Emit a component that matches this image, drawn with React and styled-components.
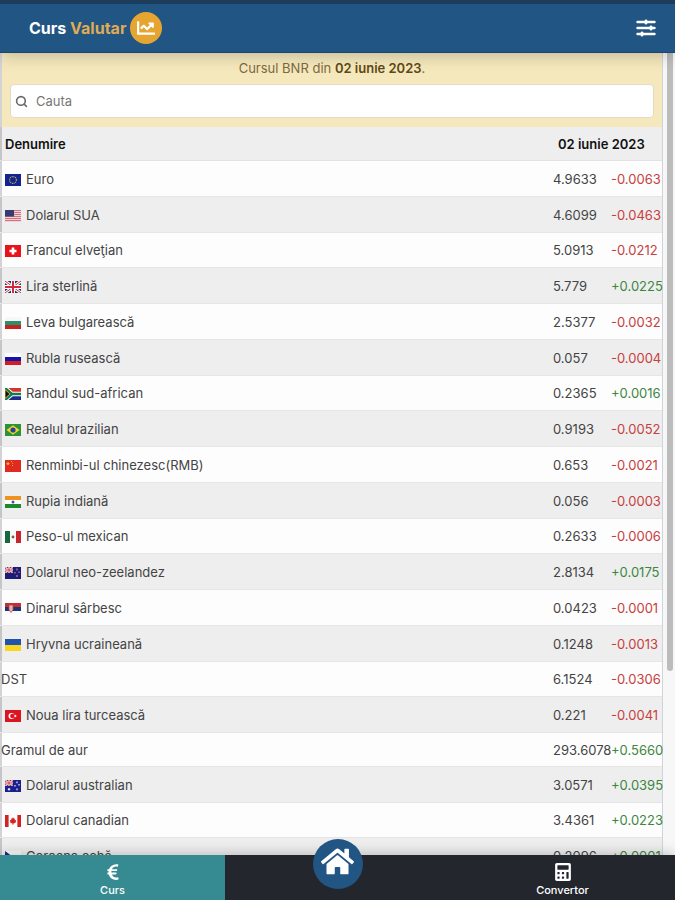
import { useState } from 'react';
import styled, { createGlobalStyle } from 'styled-components';
import { Search } from 'lucide-react';
import { FaCalculator, FaChartLine, FaEuroSign, FaHome } from 'react-icons/fa';

const GlobalStyle = createGlobalStyle`
  * {
    box-sizing: border-box;
  }

  body {
    margin: 0;
    font-family: Inter, 'Liberation Sans', sans-serif;
    font-size: 13px;
    color: #444;
    background-color: #fdfdfd;
  }
`;

const Page = styled.div`
  display: flex;
  flex-direction: column;
  height: 100vh;
  overflow: hidden;
`;

const Header = styled.header`
  position: relative;
  z-index: 1;
  display: flex;
  align-items: center;
  justify-content: space-between;
  flex: none;
  height: 53px;
  padding: 0 19px 0 29px;
  border-top: 4px solid #1c3d5c;
  border-bottom: 1px solid #17486f;
  background-color: #215583;
  box-shadow: 0 2px 16px rgba(0, 0, 0, 0.22);
`;

const Brand = styled.a`
  display: flex;
  align-items: center;
  gap: 4px;
  font-size: 16px;
  font-weight: 700;
  color: #fff;
  text-decoration: none;
`;

const BrandAccent = styled.span`
  color: #dfab55;
`;

const BrandIcon = styled.span`
  display: flex;
  align-items: center;
  justify-content: center;
  width: 32px;
  height: 32px;
  border-radius: 50%;
  background-color: #e5a530;
  font-size: 18px;
`;

const IconButton = styled.button`
  display: flex;
  padding: 0;
  border: none;
  background: none;
  color: #fff;
  cursor: pointer;
`;

const Content = styled.main`
  display: flex;
  flex: 1;
  min-height: 0;
  overflow: hidden;
`;

const Panel = styled.section`
  flex: 1;
  min-width: 0;
  border-right: 1px solid #cdd5da;
  box-shadow: inset 2px 0 0 #d3d3d6;
`;

const Track = styled.div`
  flex: none;
  width: 12px;
  padding: 0 2px 0 4px;
  background-color: #f7f7f7;
`;

const Thumb = styled.div`
  height: 77%;
  border-radius: 0 0 3px 3px;
  background-color: #bcbcbc;
`;

const Notice = styled.div`
  display: flex;
  flex-direction: column;
  gap: 8px;
  margin-left: 2px;
  padding: 7px 8px 9px;
  background-color: #f5e8bd;
`;

const NoticeText = styled.p`
  margin: 0;
  line-height: 16px;
  text-align: center;
  color: #7d6a3c;

  strong {
    font-weight: 600;
    color: #5f4a14;
  }
`;

const SearchBox = styled.label`
  display: flex;
  align-items: center;
  gap: 8px;
  height: 34px;
  padding: 0 4px;
  border: 1px solid #e3dcc4;
  border-radius: 4px;
  background-color: #fff;
  color: #6a6a6a;
`;

const SearchInput = styled.input`
  flex: 1;
  min-width: 0;
  padding: 0;
  border: none;
  outline: none;
  background: none;
  font: inherit;
  color: #444;

  &::placeholder {
    color: #777;
    opacity: 1;
  }
`;

const Table = styled.table`
  width: 100%;
  table-layout: fixed;
  border-collapse: collapse;
`;

const Column = styled.col`
  width: ${({ $width }) => $width || 'auto'};
`;

const HeadCell = styled.th`
  height: 34px;
  padding: 0 5px;
  background-color: rgba(0, 0, 0, 0.06);
  box-shadow: inset 0 -1px 0 #e2e2e2;
  font-weight: 600;
  text-align: left;
  color: #111;
`;

const Row = styled.tr`
  height: ${({ $plain }) => ($plain ? '33px' : '35px')};

  &:nth-child(even) {
    height: 37px;
    background-color: rgba(0, 0, 0, 0.06);
    box-shadow: inset 0 1px 0 #e6e6e6, inset 0 -1px 0 #e6e6e6;
  }

  &:nth-child(4n + 3) {
    height: 34px;
  }
`;

const Cell = styled.td`
  padding: 0;
  white-space: nowrap;
`;

const Name = styled.span`
  display: flex;
  align-items: center;
  gap: 5px;
  padding-left: ${({ $plain }) => ($plain ? '1px' : '5px')};
`;

const Change = styled(Cell)`
  color: ${({ $up }) => ($up ? '#3c8741' : '#c8403e')};
`;

const FlagSvg = styled.svg`
  flex: none;
  margin-top: 2px;
`;

const Footer = styled.nav`
  position: relative;
  z-index: 1;
  display: grid;
  grid-template-columns: repeat(3, 1fr);
  flex: none;
  height: 45px;
  background-color: #24262d;
  box-shadow: 0 -2px 12px rgba(0, 0, 0, 0.2);
`;

const Tab = styled.button`
  display: flex;
  flex-direction: column;
  align-items: center;
  justify-content: flex-end;
  gap: 2px;
  padding: 0 0 3px;
  border: none;
  background-color: ${({ $active }) => ($active ? '#358b91' : 'transparent')};
  font-family: inherit;
  font-size: 11px;
  font-weight: 500;
  line-height: 14px;
  color: #fff;
  cursor: pointer;
`;

const HomeButton = styled.button`
  display: flex;
  align-items: center;
  justify-content: center;
  justify-self: center;
  width: 50px;
  height: 50px;
  margin-top: -16px;
  padding: 0 0 5px;
  border: none;
  border-radius: 50%;
  background-color: #215583;
  font-size: 33px;
  color: #fff;
  cursor: pointer;
`;

const UnionJack = () => (
  <>
    <path d="M0 0h16v12H0z" fill="#28306e" />
    <path d="M0 0l16 12M16 0L0 12" stroke="#fff" strokeWidth="3" />
    <path d="M0 0l16 12M16 0L0 12" stroke="#cf2a3a" strokeWidth="1" />
    <path d="M8 0v12M0 6h16" stroke="#fff" strokeWidth="4" />
    <path d="M8 0v12M0 6h16" stroke="#cf2a3a" strokeWidth="2" />
  </>
);

const flags = {
  eu: (
    <>
      <path d="M0 0h16v12H0z" fill="#14248f" />
      <circle cx="8" cy="6" r="3.4" fill="none" stroke="#c9b84a" strokeWidth="1.1" strokeDasharray="1 0.78" />
    </>
  ),
  us: (
    <>
      <path d="M0 0h16v12H0z" fill="#f0d3d7" />
      <path d="M0 .5h16M0 2.5h16M0 4.5h16M0 6.5h16M0 8.5h16M0 10.5h16" stroke="#cf7480" />
      <path d="M0 0h9v6.5H0z" fill="#343c70" />
    </>
  ),
  ch: (
    <>
      <path d="M0 0h16v12H0z" fill="#e8141c" />
      <path d="M8 2.500v7M4.500 6h7" stroke="#fff" strokeWidth="2.6" />
    </>
  ),
  gb: <UnionJack />,
  bg: (
    <>
      <path d="M0 0h16v4H0z" fill="#f7f7f7" />
      <path d="M0 4h16v4H0z" fill="#2d8f6c" />
      <path d="M0 8h16v4H0z" fill="#c4231f" />
    </>
  ),
  ru: (
    <>
      <path d="M0 0h16v4H0z" fill="#fbfbfb" />
      <path d="M0 4h16v4H0z" fill="#1414a8" />
      <path d="M0 8h16v4H0z" fill="#d01c24" />
    </>
  ),
  za: (
    <>
      <path d="M0 0h16v6H0z" fill="#d8322c" />
      <path d="M0 6h16v6H0z" fill="#1c2c8c" />
      <path d="M0 0l7 6-7 6M7 6h9" fill="none" stroke="#fff" strokeWidth="4.4" />
      <path d="M0 0l7 6-7 6M7 6h9" fill="none" stroke="#127a50" strokeWidth="2.5" />
      <path d="M0 1.500L5 6l-5 4.500z" fill="#111" stroke="#d9a928" strokeWidth="1" />
    </>
  ),
  br: (
    <>
      <path d="M0 0h16v12H0z" fill="#2c9238" />
      <path d="M8 1.200L14.500 6 8 10.800 1.500 6z" fill="#f0d32c" />
      <circle cx="8" cy="6" r="2.6" fill="#27449a" />
    </>
  ),
  cn: (
    <>
      <path d="M0 0h16v12H0z" fill="#e02a20" />
      <path d="M3 1.500l.6 1.500h1.500L3.900 4l.5 1.500L3 4.600l-1.400.9.500-1.500L.9 3h1.500z" fill="#f2b92c" />
      <path d="M6 1h1v1H6zM7.200 2.700h1v1h-1zM7 5h1v1H7z" fill="#f2b92c" />
    </>
  ),
  in: (
    <>
      <path d="M0 0h16v4H0z" fill="#ee9220" />
      <path d="M0 4h16v4H0z" fill="#fff" />
      <path d="M0 8h16v4H0z" fill="#1c8a2c" />
      <circle cx="8" cy="6" r="1.5" fill="#4a4fb4" />
    </>
  ),
  mx: (
    <>
      <path d="M0 0h16v12H0z" fill="#fafafa" />
      <path d="M0 0h5v12H0z" fill="#15693f" />
      <path d="M11 0h5v12h-5z" fill="#c8252d" />
      <circle cx="8" cy="6" r="1.4" fill="#8a5535" />
    </>
  ),
  nz: (
    <>
      <path d="M0 0h16v12H0z" fill="#1a1d78" />
      <svg width="8" height="6" viewBox="0 0 16 12">
        <UnionJack />
      </svg>
      <path d="M12 1.500v2M12 8v2M10 5v1.500M14 4.500V6" stroke="#d0707e" strokeWidth="1.3" />
    </>
  ),
  rs: (
    <>
      <path d="M0 0h16v4H0z" fill="#c22e33" />
      <path d="M0 4h16v4H0z" fill="#1d3478" />
      <path d="M0 8h16v4H0z" fill="#fafafa" />
      <path d="M4 2h4v5L6 9.500 4 7z" fill="#e6b7a8" stroke="#b9474a" strokeWidth=".8" />
    </>
  ),
  ua: (
    <>
      <path d="M0 0h16v6H0z" fill="#1f53ae" />
      <path d="M0 6h16v6H0z" fill="#fad51e" />
    </>
  ),
  tr: (
    <>
      <path d="M0 0h16v12H0z" fill="#dc1420" />
      <circle cx="6.5" cy="6" r="3" fill="#fff" />
      <circle cx="7.4" cy="6" r="2.3" fill="#dc1420" />
      <path d="M10.500 4.600l.4 1 1.100.4-1.100.4-.4 1-.7-.9-1 .1.600-.6-.6-.7 1 .1z" fill="#fff" />
    </>
  ),
  au: (
    <>
      <path d="M0 0h16v12H0z" fill="#1c1f8e" />
      <svg width="8" height="6" viewBox="0 0 16 12">
        <UnionJack />
      </svg>
      <path d="M4 8v2.500M2.800 9.200h2.500M12 1.500v1.700M12 8.500v1.700M10 5v1.500M14 4v1.500" stroke="#fff" strokeWidth="1.1" />
    </>
  ),
  ca: (
    <>
      <path d="M0 0h16v12H0z" fill="#fdfdfd" />
      <path d="M0 0h3.600v12H0zM12.400 0H16v12h-3.600z" fill="#d3221f" />
      <path d="M8 2.200l1 1.600.9-.3-.2 1.800 1.500-.2-.5 1.300.5.500-2.200 1.500H8.300v1.500h-.6V8.400H7L4.800 6.900l.5-.5-.5-1.300 1.500.2-.2-1.800.9.300z" fill="#d3221f" />
    </>
  ),
  cz: (
    <>
      <path d="M0 0h16v6H0z" fill="#fafafa" />
      <path d="M0 6h16v6H0z" fill="#d01c24" />
      <path d="M0 0l8 6-8 6z" fill="#1b2a80" />
    </>
  ),
};

const rates = [
  { flag: 'eu', name: 'Euro', value: '4.9633', change: '-0.0063' },
  { flag: 'us', name: 'Dolarul SUA', value: '4.6099', change: '-0.0463' },
  { flag: 'ch', name: 'Francul elveţian', value: '5.0913', change: '-0.0212' },
  { flag: 'gb', name: 'Lira sterlină', value: '5.779', change: '+0.0225' },
  { flag: 'bg', name: 'Leva bulgarească', value: '2.5377', change: '-0.0032' },
  { flag: 'ru', name: 'Rubla rusească', value: '0.057', change: '-0.0004' },
  { flag: 'za', name: 'Randul sud-african', value: '0.2365', change: '+0.0016' },
  { flag: 'br', name: 'Realul brazilian', value: '0.9193', change: '-0.0052' },
  { flag: 'cn', name: 'Renminbi-ul chinezesc(RMB)', value: '0.653', change: '-0.0021' },
  { flag: 'in', name: 'Rupia indiană', value: '0.056', change: '-0.0003' },
  { flag: 'mx', name: 'Peso-ul mexican', value: '0.2633', change: '-0.0006' },
  { flag: 'nz', name: 'Dolarul neo-zeelandez', value: '2.8134', change: '+0.0175' },
  { flag: 'rs', name: 'Dinarul sârbesc', value: '0.0423', change: '-0.0001' },
  { flag: 'ua', name: 'Hryvna ucraineană', value: '0.1248', change: '-0.0013' },
  { name: 'DST', value: '6.1524', change: '-0.0306' },
  { flag: 'tr', name: 'Noua lira turcească', value: '0.221', change: '-0.0041' },
  { name: 'Gramul de aur', value: '293.6078', change: '+0.5660' },
  { flag: 'au', name: 'Dolarul australian', value: '3.0571', change: '+0.0395' },
  { flag: 'ca', name: 'Dolarul canadian', value: '3.4361', change: '+0.0223' },
  { flag: 'cz', name: 'Coroana cehă', value: '0.2096', change: '+0.0001' },
];

function Flag({ code }) {
  return (
    <FlagSvg width="16" height="12" viewBox="0 0 16 12" aria-hidden="true">
      {flags[code]}
    </FlagSvg>
  );
}

function OptionsIcon() {
  return (
    <svg width="20" height="18" viewBox="0 0 20 18" fill="none" stroke="currentColor" strokeLinecap="round" aria-hidden="true">
      <path d="M1.500 3h17M1.500 9h17M1.500 15h17" strokeWidth="2.4" />
      <path d="M10 1.800v2.400M15 7.800v2.400M6 13.800v2.400" strokeWidth="2.8" />
    </svg>
  );
}

export default function App() {
  const [query, setQuery] = useState('');
  const visible = rates.filter((rate) => rate.name.toLowerCase().includes(query.toLowerCase()));

  return (
    <Page>
      <GlobalStyle />
      <Header>
        <Brand href="#">
          <span>
            Curs <BrandAccent>Valutar</BrandAccent>
          </span>
          <BrandIcon>
            <FaChartLine />
          </BrandIcon>
        </Brand>
        <IconButton aria-label="Setări">
          <OptionsIcon />
        </IconButton>
      </Header>
      <Content>
        <Panel>
          <Notice>
            <NoticeText>
              Cursul BNR din <strong>02 iunie 2023</strong>.
            </NoticeText>
            <SearchBox>
              <Search size={13} strokeWidth={3} aria-hidden="true" />
              <SearchInput
                type="text"
                placeholder="Cauta"
                aria-label="Cauta"
                value={query}
                onChange={(e) => setQuery(e.target.value)}
              />
            </SearchBox>
          </Notice>
          <Table>
            <colgroup>
              <Column />
              <Column $width="58px" />
              <Column $width="51px" />
            </colgroup>
            <thead>
              <tr>
                <HeadCell>Denumire</HeadCell>
                <HeadCell colSpan={2}>02 iunie 2023</HeadCell>
              </tr>
            </thead>
            <tbody>
              {visible.map((rate) => (
                <Row key={rate.name} $plain={!rate.flag}>
                  <Cell>
                    <Name $plain={!rate.flag}>
                      {rate.flag && <Flag code={rate.flag} />}
                      {rate.name}
                    </Name>
                  </Cell>
                  <Cell>{rate.value}</Cell>
                  <Change $up={rate.change.startsWith('+')}>{rate.change}</Change>
                </Row>
              ))}
            </tbody>
          </Table>
        </Panel>
        <Track>
          <Thumb />
        </Track>
      </Content>
      <Footer>
        <Tab $active>
          <FaEuroSign size={18} aria-hidden="true" />
          Curs
        </Tab>
        <HomeButton aria-label="Acasă">
          <FaHome />
        </HomeButton>
        <Tab>
          <FaCalculator size={18} aria-hidden="true" />
          Convertor
        </Tab>
      </Footer>
    </Page>
  );
}
